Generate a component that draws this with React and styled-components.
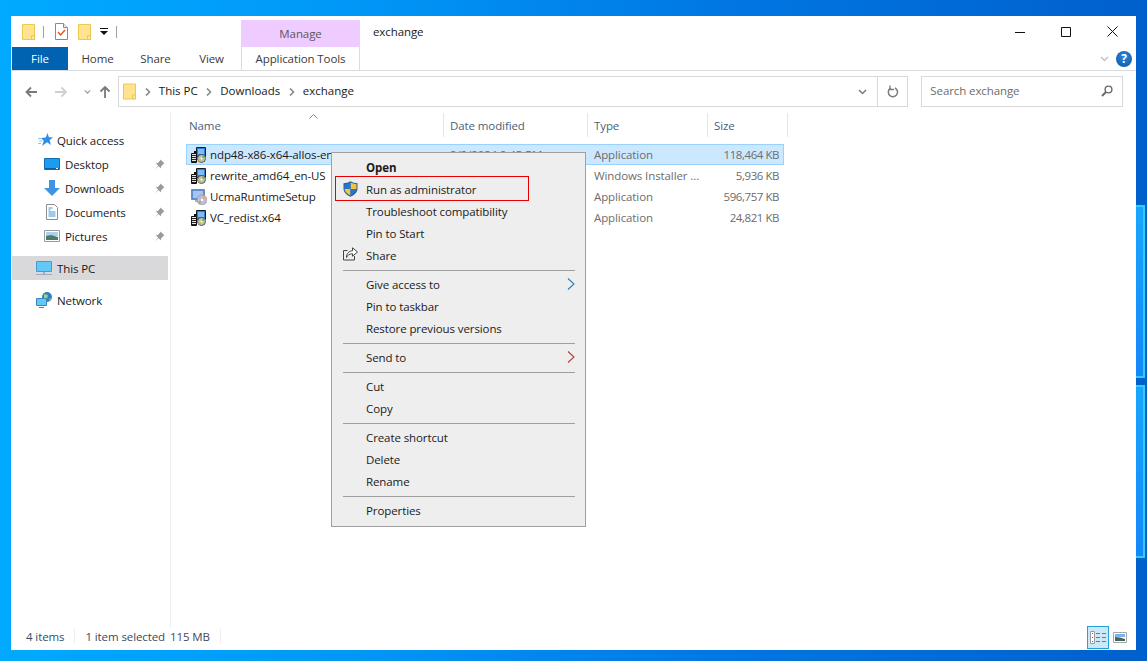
import React from "react";
import styled, { createGlobalStyle } from "styled-components";

const GlobalStyle = createGlobalStyle`
  html, body {
    margin: 0;
    padding: 0;
    overflow: hidden;
  }
  * {
    box-sizing: border-box;
  }
  body {
    font-family: "Open Sans", "Noto Sans", sans-serif;
    font-size: 11.5px;
    letter-spacing: -0.1px;
    color: #1a1a1a;
  }
`;

const Desktop = styled.div`
  position: relative;
  width: 1147px;
  height: 661px;
  padding: 16px 11px 11px;
  overflow: hidden;
  background: linear-gradient(90deg, #00aaff 0%, #0098f8 30%, #0078e4 62%, #0060cc 100%);
`;

const GlassPane = styled.div`
  position: absolute;
  left: 1136px;
  top: ${(p) => p.$top}px;
  width: 9px;
  height: ${(p) => p.$height}px;
  background: linear-gradient(180deg, #18a6ff, #1488fa);
  border: solid #2fd0ff;
  border-width: 2px 2px 2px 0;
`;

const Window = styled.div`
  position: relative;
  width: 1125px;
  height: 634px;
  background: #fff;
  display: flex;
  flex-direction: column;
`;

const TitleBar = styled.div`
  height: 31px;
  display: flex;
  align-items: stretch;
  padding-right: 1px;
`;

const QuickBar = styled.div`
  width: 230px;
  display: flex;
  align-items: center;
  padding-left: 11px;
`;

const QuickDivider = styled.span`
  width: 1px;
  height: 12px;
  background: #a0a0a0;
  margin: 0 ${(p) => p.$right}px 0 ${(p) => p.$left}px;
`;

const QuickGap = styled.span`
  width: ${(p) => p.$width}px;
`;

const ManageTab = styled.div`
  width: 119px;
  margin-top: 4px;
  background: #eeccff;
  color: #5d5566;
  display: flex;
  align-items: center;
  justify-content: center;
`;

const WindowTitle = styled.div`
  flex: 1;
  padding: 0 0 0 13px;
  line-height: 31px;
`;

const ControlButton = styled.div`
  width: 46px;
  display: flex;
  align-items: center;
  justify-content: center;
`;

const TabRow = styled.div`
  height: 24px;
  display: flex;
  border-bottom: 1px solid #dadbdc;
  padding-left: 1px;
`;

const Tab = styled.div`
  width: ${(p) => p.$width}px;
  height: 23px;
  display: flex;
  align-items: center;
  justify-content: center;
  color: ${(p) => (p.$file ? "#fff" : "#3b3b3b")};
  background: ${(p) => (p.$file ? "#0063b1" : "transparent")};
`;

const ContextTab = styled(Tab)`
  margin-left: 2px;
  border-left: 1px solid #dadbdc;
  border-right: 1px solid #dadbdc;
`;

const RibbonEnd = styled.div`
  flex: 1;
  height: 23px;
  display: flex;
  align-items: center;
  justify-content: flex-end;
  gap: 7px;
  padding-right: 4px;
`;

const HelpBadge = styled.div`
  width: 16px;
  height: 16px;
  border-radius: 50%;
  background: radial-gradient(circle at 50% 35%, #2d84d8, #0b57a8);
  color: #fff;
  font-weight: 700;
  font-size: 12px;
  line-height: 16px;
  text-align: center;
`;

const AddressRow = styled.div`
  height: 41px;
  display: flex;
  align-items: center;
  padding: 5px 13px 5px 0;
`;

const NavButtons = styled.div`
  width: 107px;
  height: 16px;
  display: flex;
  align-items: center;
  padding-left: 14px;
`;

const NavButton = styled.div`
  width: ${(p) => p.$width}px;
  display: flex;
  align-items: center;
`;

const AddressBox = styled.div`
  width: 792px;
  height: 31px;
  border: 1px solid #d9d9d9;
  display: flex;
  align-items: center;
  padding-left: 4px;
`;

const Crumb = styled.span`
  color: #1a1a1a;
  letter-spacing: 0;
  margin: 0 8.5px 2px 0;
`;

const CrumbArrow = styled.svg`
  width: 6px;
  height: 8px;
  margin: 0 8px 0 ${(p) => p.$left || 0}px;
`;

const AddressSpacer = styled.div`
  flex: 1;
`;

const AddressAction = styled.div`
  width: 30px;
  height: 100%;
  display: flex;
  align-items: center;
  justify-content: center;
  border-left: ${(p) => (p.$divided ? "1px solid #d9d9d9" : "none")};
`;

const SearchBox = styled.div`
  width: 202px;
  height: 31px;
  margin-left: 13px;
  border: 1px solid #d9d9d9;
  display: flex;
  align-items: center;
  justify-content: space-between;
  padding: 0 9px 2px 8px;
  color: #6d6d6d;
`;

const Body = styled.div`
  flex: 1;
  display: flex;
  min-height: 0;
`;

const NavPane = styled.nav`
  width: 160px;
  padding: 16px 0 0 1px;
  border-right: 1px solid #f0f0f0;
`;

const NavRow = styled.div`
  position: relative;
  width: 156px;
  height: 24px;
  display: flex;
  align-items: center;
  gap: ${(p) => p.$gap || 5}px;
  padding-left: ${(p) => p.$indent}px;
  margin-top: ${(p) => p.$top || 0}px;
  background: ${(p) => (p.$active ? "#d9d9dc" : "transparent")};
`;

const PinSlot = styled.span`
  margin-left: auto;
  margin-right: 3px;
  display: flex;
`;

const IconSlot = styled.span`
  width: ${(p) => p.$size || 16}px;
  display: flex;
  justify-content: center;
  flex: none;
`;

const FileArea = styled.main`
  flex: 1;
  padding: 1px 0 0 15px;
  position: relative;
`;

const SortCaret = styled.svg`
  position: absolute;
  left: 138px;
  top: 2px;
`;

const HeaderRow = styled.div`
  display: grid;
  grid-template-columns: 257px 144px 120px 80px;
  height: 24px;
  margin: 0 0 7px 1px;
  color: #4c607a;
`;

const HeaderCell = styled.div`
  display: flex;
  align-items: center;
  padding-left: ${(p) => p.$pad}px;
  border-right: 1px solid #e5e5e5;
`;

const FileRow = styled.div`
  display: grid;
  grid-template-columns: 257px 144px 120px 77px;
  width: 598px;
  height: 21px;
  align-items: center;
  background: ${(p) => (p.$selected ? "#cce8ff" : "transparent")};
  outline: ${(p) => (p.$selected ? "1px solid #99d1ff" : "none")};
  outline-offset: -1px;
`;

const NameCell = styled.div`
  display: flex;
  align-items: center;
  gap: 3px;
  padding-left: 5px;
  white-space: nowrap;
`;

const MutedCell = styled.div`
  padding-left: 7px;
  color: #6d6d6d;
  white-space: nowrap;
`;

const SizeCell = styled.div`
  text-align: right;
  padding-right: 5px;
  letter-spacing: -0.45px;
  color: #6d6d6d;
`;

const StatusBar = styled.footer`
  height: 22px;
  display: flex;
  align-items: center;
  padding: 0 9px 6px 15px;
  color: #3c4a5e;
`;

const StatusText = styled.span`
  margin-left: ${(p) => p.$left || 0}px;
`;

const StatusDivider = styled.span`
  width: 1px;
  height: 14px;
  background: #efefef;
  margin: 0 10px;
`;

const ViewButtons = styled.div`
  margin-left: auto;
  display: flex;
  align-items: center;
  gap: 4px;
  margin-top: 3px;
`;

const DetailsButton = styled.div`
  width: 22px;
  height: 23px;
  border: 1px solid #26a0da;
  background: #cce8f7;
  display: flex;
  align-items: center;
  justify-content: center;
`;

const ContextMenu = styled.div`
  position: absolute;
  left: 331px;
  top: 152px;
  width: 255px;
  height: 375px;
  padding: 4px 1px;
  background: #eee;
  border: 1px solid #a0a0a0;
  color: #1a1a1a;
`;

const MenuItem = styled.div`
  position: relative;
  height: 22px;
  display: flex;
  align-items: center;
  padding: 0 9px 2px 33px;
  font-weight: ${(p) => (p.$bold ? 700 : 400)};
`;

const MenuIcon = styled.span`
  position: absolute;
  left: 10px;
  top: 2px;
  display: flex;
`;

const MenuChevron = styled.svg`
  margin-left: auto;
`;

const MenuSeparator = styled.div`
  height: 7px;
  margin: 0 9px 0 10px;
  background: linear-gradient(#a0a0a0, #a0a0a0) center 3px / 100% 1px no-repeat;
`;

const Highlight = styled.div`
  position: absolute;
  left: 2px;
  top: -3px;
  width: 194px;
  height: 25px;
  border: 1px solid #e60000;
`;

const Folder = ({ h = 16 }) => (
  <svg width="13" height={h} viewBox="0 0 13 16">
    <path d="M.5.5h12v15H.5z" fill="#ffe38f" stroke="#ecc952" />
    <path d="M9.5 11.5h3v4h-3z" fill="#ffe38f" stroke="#ecc952" />
  </svg>
);

const NoteCheck = () => (
  <svg width="13" height="17" viewBox="0 0 13 17">
    <path d="M.5.5h8l4 4v12H.5z" fill="#fff" stroke="#8a8a8a" />
    <path d="M8.5.5v4h4" fill="#eee" stroke="#8a8a8a" />
    <path d="M3 9l2.5 3L10 7" fill="none" stroke="#e8501f" strokeWidth="1.4" />
  </svg>
);

const QuickDrop = () => (
  <svg width="8" height="7" viewBox="0 0 8 7">
    <path d="M0 0h8v1H0zM0 3h8L4 7z" fill="#111" />
  </svg>
);

const Arrow = ({ dir, color }) => {
  const d = {
    left: "M12 7H1.500M6 2.500L1.500 7 6 11.500",
    right: "M0 7h11M6.500 2.500L11 7l-4.500 4.500",
    up: "M6 13V2M1.500 6.500L6 2l4.500 4.500",
  }[dir];
  return (
    <svg width="13" height="14" viewBox="0 0 13 14">
      <path d={d} fill="none" stroke={color} strokeWidth="1.8" />
    </svg>
  );
};

const Chevron = ({ color = "#7a7a7a", w = 9 }) => (
  <svg width={w} height="6" viewBox="0 0 9 6">
    <path d="M1 1l3.5 3.5L8 1" fill="none" stroke={color} strokeWidth="1.5" />
  </svg>
);

const PathArrow = ({ left }) => (
  <CrumbArrow $left={left} viewBox="0 0 6 8">
    <path d="M1 .5L4.500 4 1 7.500" fill="none" stroke="#8a8a8a" strokeWidth="1.6" />
  </CrumbArrow>
);

const Refresh = () => (
  <svg width="12" height="13" viewBox="0 0 12 13">
    <path d="M3.500 3.200A4.600 4.600 0 1 0 8 3" fill="none" stroke="#7a7a7a" strokeWidth="1.5" />
    <path d="M3 .5v4h4" fill="none" stroke="#7a7a7a" strokeWidth="1.3" />
  </svg>
);

const SearchGlass = () => (
  <svg width="12" height="12" viewBox="0 0 12 12">
    <circle cx="7.500" cy="4.500" r="3.400" fill="none" stroke="#6b6b6b" strokeWidth="1.4" />
    <path d="M5 7L1 11" stroke="#6b6b6b" strokeWidth="2" />
  </svg>
);

const Pin = () => (
  <svg width="11" height="11" viewBox="0 0 11 11">
    <path d="M6.500.5l4 4-1.200.6-2.200 2.300-.3 2L4.500 7.100.8 10.500l3.300-3.900L1.800 4.300l2-.3 2.200-2.200z" fill="#9a9a9a" />
  </svg>
);

const QuickStar = () => (
  <svg width="15" height="14" viewBox="0 0 15 14">
    <path d="M9.500 0l1.400 4.300H15l-3.300 2.900 1.200 4.800-3.800-2.800L4 13l1.800-5L3 5l4.800-.6z" fill="#2f8fe6" />
    <path d="M0 5.500h3M1 8h3M0 10.500h3" stroke="#8cc4f0" />
  </svg>
);

const DesktopIcon = () => (
  <svg width="16" height="12" viewBox="0 0 16 12">
    <path d="M.5.5h15v11H.5z" fill="#1a9cf0" stroke="#0f6fb8" />
    <path d="M1 10h14v1.500H1z" fill="#0c5fa6" />
    <path d="M12 10.500h2" stroke="#fff" />
  </svg>
);

const DownloadIcon = () => (
  <svg width="16" height="16" viewBox="0 0 16 16">
    <path d="M5 0h6v8h5l-8 8-8-8h5z" fill="#3f94e4" />
  </svg>
);

const DocumentIcon = () => (
  <svg width="12" height="16" viewBox="0 0 12 16">
    <path d="M.5.5h8l3 3v12H.5z" fill="#fff" stroke="#8f8f8f" />
    <path d="M2.500 4h4M2.500 6h2M2.500 8h7M2.500 10h7M2.500 12h7" stroke="#3f94d8" />
  </svg>
);

const PictureIcon = () => (
  <svg width="16" height="12" viewBox="0 0 16 12">
    <path d="M.5.5h15v11H.5z" fill="#fff" stroke="#9a9a9a" />
    <path d="M2 2h12v4H2z" fill="#a9d4ee" />
    <path d="M2 6l5-1 7 2v3H2z" fill="#4f7a68" />
  </svg>
);

const ThisPcIcon = () => (
  <svg width="16" height="15" viewBox="0 0 16 15">
    <path d="M.5.5h15v10H.5z" fill="#63c8f5" stroke="#4a9ad0" />
    <path d="M7 11h2v2H7z" fill="#9ab0c2" />
    <path d="M0 13.500h16" stroke="#9ab0c2" />
  </svg>
);

const NetworkIcon = () => (
  <svg width="16" height="16" viewBox="0 0 16 16">
    <circle cx="11" cy="5" r="5" fill="#2f7fc6" />
    <path d="M8 2l4 1-1 4-3-1zM13 7l2-1-1 3z" fill="#9bcf8a" />
    <path d="M.5 6.500h10v7H.5z" fill="#63c8f5" stroke="#3a86c2" />
    <path d="M3 15.500h5" stroke="#3a86c2" />
  </svg>
);

const InstallerIcon = () => (
  <svg width="16" height="16" viewBox="0 0 16 16">
    <path d="M5.500.5h9v9h-9z" fill="#2f7fd6" stroke="#141c2c" />
    <path d="M7 2h6v5H7z" fill="#7cbcf2" />
    <path d="M.5 6.500h5v9h-5z" fill="#e6e6e6" stroke="#111" />
    <path d="M1 8.500h4M1 10.500h4M1 12.500h4M1 14.500h4" stroke="#222" />
    <path d="M4 4v3" stroke="#111" strokeWidth="2" />
    <circle cx="10.500" cy="11.500" r="4" fill="#b9c4bb" stroke="#3a3a3a" strokeWidth=".8" />
    <path d="M10.500 11.500l3.600-1.400a4 4 0 0 0-1.600-2z" fill="#6cb52e" />
    <path d="M10.500 11.500l-3.600 1.400a4 4 0 0 0 1.600 2z" fill="#d8b92a" />
    <circle cx="10.500" cy="11.500" r="1" fill="#fff" />
  </svg>
);

const SetupIcon = () => (
  <svg width="16" height="16" viewBox="0 0 16 16">
    <path d="M.5.5h13v10H.5z" fill="#5f8ed0" stroke="#7c8ca4" />
    <path d="M2 2h10v7H2z" fill="#a4c6ee" />
    <path d="M4 11h6v2H4z" fill="#aab4c2" />
    <circle cx="11" cy="11" r="5" fill="#c6b8dc" stroke="#9488a8" strokeWidth=".6" />
    <path d="M11 11l4-2a5 5 0 0 0-2-2z" fill="#e6b84e" />
    <path d="M11 11l-4 2a5 5 0 0 0 2 2z" fill="#8fbc4e" />
    <circle cx="11" cy="11" r="1.200" fill="#fff" />
  </svg>
);

const Shield = () => (
  <svg width="15" height="16" viewBox="0 0 15 16">
    <path d="M7.500.3C5.500 1.600 3 2.200.5 2.300v5.200c0 3.600 2.800 6.600 7 8.200 4.200-1.600 7-4.600 7-8.200V2.300C12 2.200 9.500 1.600 7.500.3z" fill="#1f5fa8" />
    <path d="M7.500 1.500v6.500h6V3.200c-2.200-.2-4.200-.8-6-1.700z" fill="#f5c33b" />
    <path d="M7.500 8v6.400C4.300 13 1.800 11 1.500 8z" fill="#f5c33b" />
    <path d="M7.500 1.500C5.700 2.400 3.700 3 1.500 3.200V8h6zM7.500 8v6.400c3.200-1.400 5.700-3.400 6-6.400z" fill="#2a76c6" />
  </svg>
);

const ShareIcon = () => (
  <svg width="15" height="14" viewBox="0 0 15 14">
    <path d="M4.500 3.500H.5v9.500h11V9" fill="none" stroke="#444" />
    <path d="M9.500.8l5 4.200-5 4.200V6.800C6.500 6.800 4.500 8 3.500 10.500c0-4 2.500-6.500 6-6.700z" fill="#fff" stroke="#444" />
  </svg>
);

const MenuArrow = ({ color }) => (
  <MenuChevron width="8" height="12" viewBox="0 0 8 12">
    <path d="M1 .5L7 6l-6 5.500" fill="none" stroke={color} strokeWidth="1.1" />
  </MenuChevron>
);

const DetailsGlyph = () => (
  <svg width="16" height="13" viewBox="0 0 16 13">
    <path d="M.5.5h4v12h-4z" fill="#fff" stroke="#9a9a9a" />
    <path d="M2 2.500h1M2 6.500h1" stroke="#666" />
    <path d="M2 10.500h1" stroke="#c0392b" />
    <path d="M6 2.500h4M12 2.500h4M6 6.500h4M12 6.500h4M6 10.500h4M12 10.500h4" stroke="#777" />
  </svg>
);

const LargeGlyph = () => (
  <svg width="14" height="11" viewBox="0 0 14 11">
    <path d="M.5.5h13v10H.5z" fill="#fff" stroke="#a8a8a8" />
    <path d="M2 2h10v3H2z" fill="#7db4ee" />
    <path d="M2 5l5 .5 5 1.500V9H2z" fill="#47675f" />
  </svg>
);

const navItems = [
  { label: "Desktop", icon: <DesktopIcon /> },
  { label: "Downloads", icon: <DownloadIcon /> },
  { label: "Documents", icon: <DocumentIcon /> },
  { label: "Pictures", icon: <PictureIcon /> },
];

const files = [
  { name: "ndp48-x86-x64-allos-enu", date: "2/2/2024 9:45 PM", type: "Application", size: "118,464 KB", icon: <InstallerIcon />, selected: true },
  { name: "rewrite_amd64_en-US", date: "", type: "Windows Installer ...", size: "5,936 KB", icon: <InstallerIcon /> },
  { name: "UcmaRuntimeSetup", date: "", type: "Application", size: "596,757 KB", icon: <SetupIcon /> },
  { name: "VC_redist.x64", date: "", type: "Application", size: "24,821 KB", icon: <InstallerIcon /> },
];

const menuGroups = [
  ["Open", "Run as administrator", "Troubleshoot compatibility", "Pin to Start", "Share"],
  ["Give access to", "Pin to taskbar", "Restore previous versions"],
  ["Send to"],
  ["Cut", "Copy"],
  ["Create shortcut", "Delete", "Rename"],
  ["Properties"],
];

const menuArrows = { "Give access to": "#2f7fb8", "Send to": "#a8453c" };

const App = () => {
  return (
    <Desktop>
      <GlobalStyle />
      <GlassPane $top={205} $height={173} />
      <GlassPane $top={385} $height={173} />
      <Window>
        <TitleBar>
          <QuickBar>
            <Folder />
            <QuickDivider $left={8} $right={11} />
            <NoteCheck />
            <QuickGap $width={10} />
            <Folder />
            <QuickGap $width={9} />
            <QuickDrop />
            <QuickDivider $left={8} $right={0} />
          </QuickBar>
          <ManageTab>Manage</ManageTab>
          <WindowTitle>exchange</WindowTitle>
          <ControlButton>
            <svg width="10" height="10" viewBox="0 0 10 10">
              <path d="M0 5.500h10" stroke="#111" />
            </svg>
          </ControlButton>
          <ControlButton>
            <svg width="10" height="10" viewBox="0 0 10 10">
              <path d="M.5.5h9v9h-9z" fill="none" stroke="#111" />
            </svg>
          </ControlButton>
          <ControlButton>
            <svg width="11" height="11" viewBox="0 0 11 11">
              <path d="M.5.5l10 10M10.500.5l-10 10" stroke="#111" />
            </svg>
          </ControlButton>
        </TitleBar>
        <TabRow>
          <Tab $file $width={56}>File</Tab>
          <Tab $width={59}>Home</Tab>
          <Tab $width={57}>Share</Tab>
          <Tab $width={55}>View</Tab>
          <ContextTab $width={119}>Application Tools</ContextTab>
          <RibbonEnd>
            <Chevron color="#c4c4c4" />
            <HelpBadge>?</HelpBadge>
          </RibbonEnd>
        </TabRow>
        <AddressRow>
          <NavButtons>
            <NavButton $width={30}><Arrow dir="left" color="#7a7a7a" /></NavButton>
            <NavButton $width={29}><Arrow dir="right" color="#d0d0d0" /></NavButton>
            <NavButton $width={15}><Chevron color="#9a9a9a" w={7} /></NavButton>
            <NavButton $width={13}><Arrow dir="up" color="#7a7a7a" /></NavButton>
          </NavButtons>
          <AddressBox>
            <Folder h={17} />
            <PathArrow left={9} />
            <Crumb>This PC</Crumb>
            <PathArrow />
            <Crumb>Downloads</Crumb>
            <PathArrow />
            <Crumb>exchange</Crumb>
            <AddressSpacer />
            <AddressAction><Chevron /></AddressAction>
            <AddressAction $divided><Refresh /></AddressAction>
          </AddressBox>
          <SearchBox>
            Search exchange
            <SearchGlass />
          </SearchBox>
        </AddressRow>
        <Body>
          <NavPane>
            <NavRow $indent={25} $gap={4}>
              <IconSlot><QuickStar /></IconSlot>
              Quick access
            </NavRow>
            {navItems.map((item) => (
              <NavRow key={item.label} $indent={32}>
                <IconSlot>{item.icon}</IconSlot>
                {item.label}
                <PinSlot><Pin /></PinSlot>
              </NavRow>
            ))}
            <NavRow $indent={24} $top={8} $active>
              <IconSlot><ThisPcIcon /></IconSlot>
              This PC
            </NavRow>
            <NavRow $indent={24} $top={8}>
              <IconSlot><NetworkIcon /></IconSlot>
              Network
            </NavRow>
          </NavPane>
          <FileArea>
            <SortCaret width="9" height="5" viewBox="0 0 9 5">
              <path d="M.5 4.500l4-4 4 4" fill="none" stroke="#8a8a8a" />
            </SortCaret>
            <HeaderRow>
              <HeaderCell $pad={2}>Name</HeaderCell>
              <HeaderCell $pad={6}>Date modified</HeaderCell>
              <HeaderCell $pad={6}>Type</HeaderCell>
              <HeaderCell $pad={6}>Size</HeaderCell>
            </HeaderRow>
            {files.map((file) => (
              <FileRow key={file.name} $selected={file.selected}>
                <NameCell>
                  {file.icon}
                  {file.name}
                </NameCell>
                <MutedCell>{file.date}</MutedCell>
                <MutedCell>{file.type}</MutedCell>
                <SizeCell>{file.size}</SizeCell>
              </FileRow>
            ))}
          </FileArea>
        </Body>
        <StatusBar>
          <StatusText>4 items</StatusText>
          <StatusDivider />
          <StatusText>1 item selected</StatusText>
          <StatusText $left={5}>115 MB</StatusText>
          <StatusDivider />
          <ViewButtons>
            <DetailsButton><DetailsGlyph /></DetailsButton>
            <LargeGlyph />
          </ViewButtons>
        </StatusBar>
      </Window>
      <ContextMenu>
        {menuGroups.map((group, i) => (
          <React.Fragment key={group[0]}>
            {i > 0 && <MenuSeparator />}
            {group.map((label) => (
              <MenuItem key={label} $bold={label === "Open"}>
                {label === "Run as administrator" && (
                  <>
                    <MenuIcon><Shield /></MenuIcon>
                    <Highlight />
                  </>
                )}
                {label === "Share" && <MenuIcon><ShareIcon /></MenuIcon>}
                {label}
                {menuArrows[label] && <MenuArrow color={menuArrows[label]} />}
              </MenuItem>
            ))}
          </React.Fragment>
        ))}
      </ContextMenu>
    </Desktop>
  );
};

export default App;
